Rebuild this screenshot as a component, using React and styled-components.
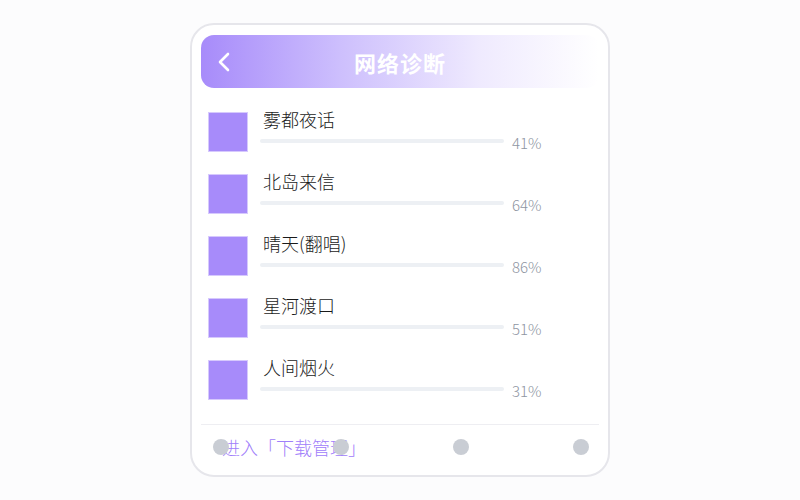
import React from "react";
import styled, { createGlobalStyle } from "styled-components";

const GlobalStyle = createGlobalStyle`
  html, body {
    margin: 0;
    padding: 0;
    background: #fcfcfd;
    font-family: "Noto Sans CJK SC", "Noto Sans", sans-serif;
  }
`;

const Page = styled.div`
  width: 800px;
  height: 500px;
  display: flex;
  align-items: center;
  justify-content: center;
`;

const Card = styled.div`
  width: 420px;
  height: 454px;
  box-sizing: border-box;
  border: 2px solid #e6e6eb;
  border-radius: 24px;
  background: #fff;
  padding: 10px 9px 0;
  display: flex;
  flex-direction: column;
`;

const Header = styled.div`
  height: 53px;
  border-radius: 13px;
  background: linear-gradient(90deg, #a78bfa 0%, #cdbffd 35%, #efeafe 70%, #ffffff 100%);
  display: flex;
  align-items: center;
  position: relative;
`;

const Back = styled.button`
  position: absolute;
  left: 16px;
  top: 50%;
  transform: translateY(-50%);
  border: none;
  background: none;
  padding: 0;
  display: flex;
`;

const Title = styled.h1`
  flex: 1;
  margin: 0;
  text-align: center;
  color: #fff;
  font-size: 22px;
  font-weight: 700;
  letter-spacing: 1px;
`;

const List = styled.div`
  display: flex;
  flex-direction: column;
  gap: 22px;
  padding: 24px 7px 24px;
  border-bottom: 1px solid #eeeef2;
`;

const Row = styled.div`
  display: flex;
  align-items: flex-start;
  height: 40px;
`;

const Cover = styled.div`
  width: 40px;
  height: 40px;
  box-sizing: border-box;
  background: #a78bfa;
  border: 1px solid #d6c9fd;
  flex-shrink: 0;
`;

const Info = styled.div`
  margin-left: 12px;
  display: flex;
  flex-direction: column;
`;

const Name = styled.div`
  padding-left: 3px;
  font-size: 18px;
  font-weight: 300;
  line-height: 20px;
  color: #1a1a1a;
  margin-top: -3px;
`;

const BarLine = styled.div`
  display: flex;
  align-items: center;
  height: 18px;
  margin-top: 3px;
`;

const Track = styled.div`
  width: 244px;
  height: 4px;
  border-radius: 2px;
  background: #edf0f4;
  overflow: hidden;
`;

const Percent = styled.span`
  margin-left: 8px;
  margin-top: 4px;
  font-size: 15px;
  font-weight: 300;
  line-height: 18px;
  color: #8e95a2;
`;

const Footer = styled.div`
  position: relative;
  height: 44px;
  display: flex;
  align-items: center;
  padding-left: 21px;
  padding-bottom: 2px;
`;

const Link = styled.a`
  font-size: 18px;
  font-weight: 300;
  color: #9f80fa;
  text-decoration: none;
`;

const Dots = styled.div`
  position: absolute;
  left: 12px;
  width: 376px;
  top: 14px;
  display: flex;
  justify-content: space-between;
  pointer-events: none;
`;

const Dot = styled.span`
  width: 16px;
  height: 16px;
  border-radius: 50%;
  background: #c9cdd4;
`;

const songs = [
  { name: "雾都夜话", pct: 41 },
  { name: "北岛来信", pct: 64 },
  { name: "晴天(翻唱)", pct: 86 },
  { name: "星河渡口", pct: 51 },
  { name: "人间烟火", pct: 31 },
];

export default function App() {
  return (
    <>
      <GlobalStyle />
      <Page>
        <Card>
          <Header>
            <Back aria-label="返回">
              <svg width="14" height="22" viewBox="0 0 14 22" fill="none">
                <polyline
                  points="11,3 3,11 11,19"
                  stroke="#fff"
                  strokeWidth="2.6"
                  strokeLinecap="round"
                  strokeLinejoin="round"
                />
              </svg>
            </Back>
            <Title>网络诊断</Title>
          </Header>
          <List>
            {songs.map((s) => (
              <Row key={s.name}>
                <Cover />
                <Info>
                  <Name>{s.name}</Name>
                  <BarLine>
                    <Track />
                    <Percent>{s.pct}%</Percent>
                  </BarLine>
                </Info>
              </Row>
            ))}
          </List>
          <Footer>
            <Link href="#">进入「下载管理」</Link>
            <Dots>
              <Dot />
              <Dot />
              <Dot />
              <Dot />
            </Dots>
          </Footer>
        </Card>
      </Page>
    </>
  );
}
